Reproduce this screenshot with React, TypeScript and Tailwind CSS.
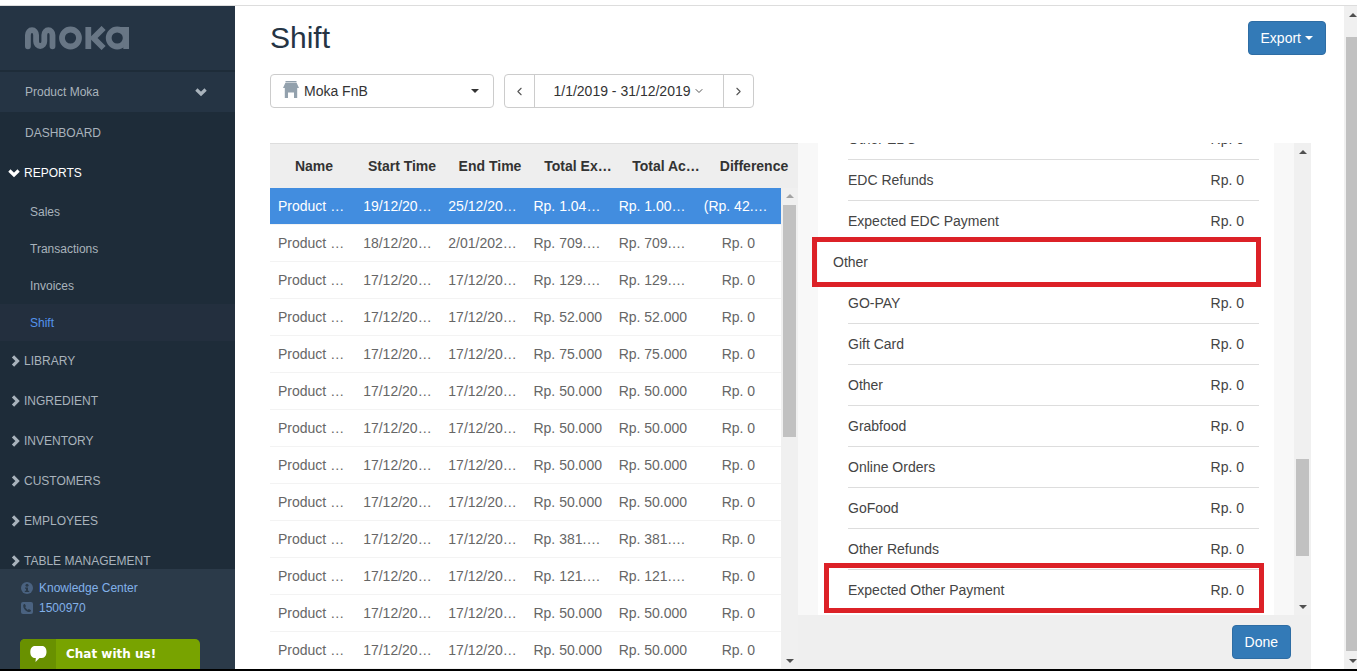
import { FiChevronDown, FiChevronLeft, FiChevronRight } from "react-icons/fi"
import clsx from "clsx"

const reports = ["Sales", "Transactions", "Invoices", "Shift"]
const sections = ["LIBRARY", "INGREDIENT", "INVENTORY", "CUSTOMERS", "EMPLOYEES", "TABLE MANAGEMENT"]

const columns = ["Name", "Start Time", "End Time", "Total Ex…", "Total Ac…", "Difference"]
const shifts = [
  ["Product …", "19/12/20…", "25/12/20…", "Rp. 1.04…", "Rp. 1.00…", "(Rp. 42.…"],
  ["Product …", "18/12/20…", "2/01/202…", "Rp. 709.…", "Rp. 709.…", "Rp. 0"],
  ["Product …", "17/12/20…", "17/12/20…", "Rp. 129.…", "Rp. 129.…", "Rp. 0"],
  ["Product …", "17/12/20…", "17/12/20…", "Rp. 52.000", "Rp. 52.000", "Rp. 0"],
  ["Product …", "17/12/20…", "17/12/20…", "Rp. 75.000", "Rp. 75.000", "Rp. 0"],
  ["Product …", "17/12/20…", "17/12/20…", "Rp. 50.000", "Rp. 50.000", "Rp. 0"],
  ["Product …", "17/12/20…", "17/12/20…", "Rp. 50.000", "Rp. 50.000", "Rp. 0"],
  ["Product …", "17/12/20…", "17/12/20…", "Rp. 50.000", "Rp. 50.000", "Rp. 0"],
  ["Product …", "17/12/20…", "17/12/20…", "Rp. 50.000", "Rp. 50.000", "Rp. 0"],
  ["Product …", "17/12/20…", "17/12/20…", "Rp. 381.…", "Rp. 381.…", "Rp. 0"],
  ["Product …", "17/12/20…", "17/12/20…", "Rp. 121.…", "Rp. 121.…", "Rp. 0"],
  ["Product …", "17/12/20…", "17/12/20…", "Rp. 50.000", "Rp. 50.000", "Rp. 0"],
  ["Product …", "17/12/20…", "17/12/20…", "Rp. 50.000", "Rp. 50.000", "Rp. 0"],
]

const edcRows = ["Other EDC", "EDC Refunds", "Expected EDC Payment"]
const otherRows = [
  "GO-PAY",
  "Gift Card",
  "Other",
  "Grabfood",
  "Online Orders",
  "GoFood",
  "Other Refunds",
  "Expected Other Payment",
]

const Logo = () => (
  <svg width="104" height="24" viewBox="0 0 104 24" fill="none" stroke="#687685" strokeWidth="5.8" aria-label="moka">
    <path d="M2.9 20.300V9a4.100 4.800 0 0 1 8.200 0v6.200a4.100 4.800 0 0 0 8.200 0V9a4.100 4.800 0 0 1 8.200 0v11.300" strokeLinecap="round" />
    <circle cx="45.5" cy="12" r="8.500" />
    <path d="M63.300 1v22" />
    <path d="M78.600 2 68.500 12l10.100 10" />
    <circle cx="92.200" cy="12" r="8.500" />
    <path d="M101.200 1v22" />
    <path d="M93 3.500h8" strokeWidth="5" />
  </svg>
)

const ChevronDown = () => (
  <svg width="12" height="12" viewBox="0 0 12 12" fill="none" stroke="currentColor" strokeWidth="3.2">
    <path d="M1.400 3.500 6 8l4.600-4.500" />
  </svg>
)

const ChevronRight = () => (
  <svg width="10" height="12" viewBox="0 0 10 12" fill="none" stroke="currentColor" strokeWidth="3.2">
    <path d="M3 1.400 7.500 6 3 10.600" />
  </svg>
)

const StoreIcon = () => (
  <svg width="16" height="17" viewBox="0 0 16 17" fill="#93a1ad" className="mb-[3px]">
    <path d="M2.500 0h11v1.500h-11zM2.300 2h11.400L16 7H0zM1.800 7h12.400v10h-3.200v-5.500H5V17H1.800z" />
  </svg>
)

const KnowledgeIcon = () => (
  <svg width="12" height="14" viewBox="0 0 12 14">
    <circle cx="6" cy="7" r="6" fill="#4a6280" />
    <circle cx="6" cy="4.300" r="1.500" fill="#2b3a49" />
    <path d="M4 6.500h3v3.200h1.200V11H3.800V9.700H5V7.700H4z" fill="#2b3a49" />
  </svg>
)

const PhoneIcon = () => (
  <svg width="12" height="12" viewBox="0 0 12 12">
    <rect width="12" height="12" rx="2" fill="#4a6280" />
    <path d="M2.200 3.200c.3-.9 1-1.300 1.700-1.200l1.100 2.200-.9.900c.5 1.200 1.500 2.200 2.700 2.800l1-.9 2.200 1.200c0 .9-.6 1.600-1.500 1.800C5.200 10 2 6.500 2.200 3.200z" fill="#2b3a49" />
  </svg>
)

const ChatIcon = () => (
  <svg width="17" height="16" viewBox="0 0 17 16" fill="#fff">
    <path d="M5 0h7c3 0 4.500 2.500 4.500 5.800S15 12 12 12H9.500L5.500 16l.3-4H5C2 12 .3 9.500.3 6S2 0 5 0z" />
  </svg>
)

const Caret = ({ className }: { className?: string }) => (
  <span className={clsx("inline-block border-x-4 border-t-4 border-x-transparent", className)} />
)

type ScrollbarProps = {
  // space above the thumb, the thumb itself, space below it
  parts: [number, number, number]
  atTop?: boolean
  className?: string
}

const Scrollbar = ({ parts, atTop, className }: ScrollbarProps) => (
  <div className={clsx("flex w-[17px] shrink-0 flex-col items-center bg-[#f0f0f0]", className)} aria-hidden="true">
    <div className="flex h-[17px] shrink-0 items-center">
      <span className={clsx("border-x-4 border-b-4 border-x-transparent", atTop ? "border-b-[#a3a3a3]" : "border-b-[#505050]")} />
    </div>
    <div className="flex w-[13px] flex-1 flex-col">
      <div className="basis-0" style={{ flexGrow: parts[0] }} />
      <div className="basis-0 bg-[#c1c1c1]" style={{ flexGrow: parts[1] }} />
      <div className="basis-0" style={{ flexGrow: parts[2] }} />
    </div>
    <div className="flex h-[17px] shrink-0 items-center">
      <Caret className="border-t-[#505050]" />
    </div>
  </div>
)

const Sidebar = () => (
  <aside className="flex w-[235px] shrink-0 flex-col bg-[#1e2c39] text-xs text-[#a9b3bc]">
    <div className="flex h-[66px] shrink-0 items-center border-b-2 border-[#1e2c39] bg-[#253444] pl-[25px]">
      <Logo />
    </div>
    <button className="flex h-10 shrink-0 items-center justify-between bg-[#253444] pr-7 pl-[25px]">
      Product Moka
      <ChevronDown />
    </button>
    <nav className="min-h-0 flex-1 overflow-hidden pt-px">
      <a href="#dashboard" className="flex h-10 items-center pl-[25px]">
        DASHBOARD
      </a>
      <a href="#reports" className="flex h-10 items-center gap-1 pl-2 text-white">
        <ChevronDown />
        REPORTS
      </a>
      {reports.map((item) => (
        <a
          key={item}
          href={`#${item.toLowerCase()}`}
          className={clsx("flex h-[37px] items-center pl-[30px]", item === "Shift" && "bg-[#232f3e] text-[#5393ec]")}
        >
          {item}
        </a>
      ))}
      {sections.map((item) => (
        <a key={item} href={`#${item.toLowerCase()}`} className="flex h-10 items-center gap-1 pl-[10px]">
          <ChevronRight />
          {item}
        </a>
      ))}
    </nav>
    <div className="flex h-[100px] shrink-0 flex-col justify-between bg-[#2b3a49] pt-[9px] pl-5 text-[#82b1ea]">
      <div>
        <a href="#knowledge" className="flex h-5 items-center gap-[6px] pl-px">
          <KnowledgeIcon />
          Knowledge Center
        </a>
        <a href="tel:1500970" className="flex h-5 items-center gap-[6px] pl-px">
          <PhoneIcon />
          1500970
        </a>
      </div>
      <button className="flex h-[30px] w-[180px] overflow-hidden rounded-t-[5px] bg-[#78a300] font-['DejaVu_Sans'] font-bold text-white">
        <span className="flex h-full w-9 items-center justify-center bg-[#699100]">
          <ChatIcon />
        </span>
        <span className="flex h-full items-center pl-[10px]">Chat with us!</span>
      </button>
    </div>
  </aside>
)

const Toolbar = () => (
  <div className="flex h-[34px] gap-[10px] text-sm text-[#333]">
    <button className="flex w-56 items-center rounded border border-[#ccc] bg-white pr-[14px] pl-3">
      <StoreIcon />
      <span className="flex-1 pl-[5px] text-left">Moka FnB</span>
      <Caret className="border-t-[#333]" />
    </button>
    <div className="flex w-[250px] divide-x divide-[#ccc] rounded border border-[#ccc] bg-white">
      <button className="flex w-[30px] items-center justify-center text-[#555]" aria-label="Previous">
        <FiChevronLeft size={13} />
      </button>
      <button className="flex flex-1 items-center justify-center gap-[2px]">
        1/1/2019 - 31/12/2019
        <FiChevronDown size={12} className="text-[#555]" />
      </button>
      <button className="flex w-[29px] items-center justify-center text-[#555]" aria-label="Next">
        <FiChevronRight size={13} />
      </button>
    </div>
  </div>
)

const ShiftTable = () => (
  <section className="flex min-h-0 flex-col">
    <table className="w-full shrink-0 table-fixed border-t border-[#ddd] bg-[#eee] text-sm text-[#333]">
      <thead>
        <tr className="h-11">
          {columns.map((name) => (
            <th key={name} className="p-0 text-center font-bold whitespace-nowrap">
              {name}
            </th>
          ))}
        </tr>
      </thead>
    </table>
    <div className="flex min-h-0 flex-1">
      <div className="min-w-0 flex-1 overflow-hidden">
        <table className="w-full table-fixed text-sm text-[#666]">
          <tbody>
            {shifts.map((cells, row) => (
              <tr
                key={row}
                className={clsx("h-[37px] border-b border-[#f3f3f3]", row === 0 && "bg-[#428ddf] text-white")}
              >
                {cells.map((cell, col) => (
                  <td
                    key={col}
                    className={clsx("p-0 pl-2 whitespace-nowrap", col === 5 && "pr-2", cell === "Rp. 0" && "text-center")}
                  >
                    {cell}
                  </td>
                ))}
              </tr>
            ))}
          </tbody>
        </table>
      </div>
      <Scrollbar parts={[0, 232, 215]} atTop />
    </div>
  </section>
)

const PaymentRow = ({ label, last }: { label: string; last?: boolean }) => (
  <li
    className={clsx(
      "relative mr-[15px] ml-[30px] flex h-[41px] shrink-0 items-center justify-between border-b pr-[15px]",
      last ? "border-transparent" : "border-[#ddd]"
    )}
  >
    <span>{label}</span>
    <span>Rp. 0</span>
    {label === "Expected Other Payment" && (
      <div className="absolute -top-[7px] -right-[5px] -bottom-[3px] -left-6 border-[5px] border-[#dc2127]" />
    )}
  </li>
)

const ShiftDetail = () => (
  <section className="flex min-h-0 flex-col">
    <div className="flex min-h-0 flex-1">
      <div className="flex min-w-0 flex-1 overflow-hidden bg-[#f8f8f8] px-5">
        <ul className="flex flex-1 flex-col justify-end bg-white pb-1 text-sm text-[#444]">
          {edcRows.map((label) => (
            <PaymentRow key={label} label={label} last={label === "Expected EDC Payment"} />
          ))}
          <li className="relative z-10 flex h-[41px] shrink-0 items-center border-b border-transparent pl-[15px]">
            Other
            <div className="absolute -top-[5px] right-[13px] -bottom-[5px] -left-[6px] border-[5px] border-[#dc2127]" />
          </li>
          {otherRows.map((label) => (
            <PaymentRow key={label} label={label} last={label === "Expected Other Payment"} />
          ))}
        </ul>
      </div>
      <Scrollbar parts={[299, 97, 42]} />
    </div>
    <div className="flex h-[54px] shrink-0 items-center justify-end bg-[#efefef] pr-5">
      <button className="h-[34px] rounded border border-[#2e6da4] bg-[#337ab7] px-3 text-sm text-white">Done</button>
    </div>
  </section>
)

const App = () => {
  return (
    <div className="flex h-screen flex-col overflow-hidden border-b-2 border-black bg-white pt-[5px] font-['Liberation_Sans',Arial,sans-serif]">
      <div className="flex min-h-0 flex-1 border-t border-[#ddd]">
        <Sidebar />
        <div className="flex min-w-0 flex-1">
          <main className="flex min-w-0 flex-1 flex-col pr-[33px] pl-[35px]">
            <header className="-mr-[15px] flex h-[68px] shrink-0 items-start justify-between pt-[15px]">
              <h1 className="text-3xl leading-[34px] text-[#253444]">Shift</h1>
              <button className="flex h-[34px] items-center gap-1 rounded border border-[#2e6da4] bg-[#337ab7] px-3 text-sm text-white">
                Export
                <Caret className="border-t-white" />
              </button>
            </header>
            <Toolbar />
            <div className="mt-[35px] grid min-h-0 flex-1 grid-cols-[528fr_513fr] grid-rows-[minmax(0,1fr)]">
              <ShiftTable />
              <ShiftDetail />
            </div>
          </main>
          <div className="flex w-[13px] shrink-0 overflow-hidden">
            <Scrollbar parts={[14, 614, 1]} />
          </div>
        </div>
      </div>
    </div>
  )
}

export default App
